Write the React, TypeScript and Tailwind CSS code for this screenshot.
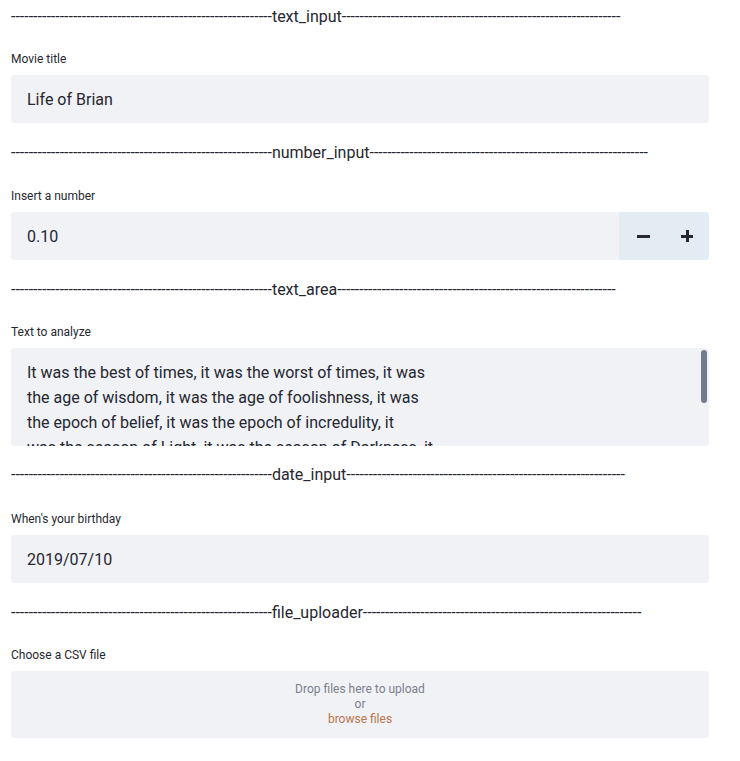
import React from "react";

const font = { fontFamily: 'Roboto, "Open Sans", sans-serif' };

function Divider({ name, top }: { name: string; top: string }) {
  return (
    <div className={`${top} h-[22px] whitespace-nowrap text-base leading-[22px] text-[#262730]`}>
      {"-".repeat(59) + name + "-".repeat(63)}
    </div>
  );
}

function Label({ children, top }: { children: React.ReactNode; top: string }) {
  return <div className={`${top} mb-[8px] h-4 text-xs leading-4 text-[#262730]`}>{children}</div>;
}

function Field({ children }: { children: React.ReactNode }) {
  return (
    <div className="flex h-12 items-center rounded bg-[#f0f2f6] px-4 pt-[2px] text-base text-[#262730]">
      {children}
    </div>
  );
}

const lines = [
  "It was the best of times, it was the worst of times, it was",
  "the age of wisdom, it was the age of foolishness, it was",
  "the epoch of belief, it was the epoch of incredulity, it",
  "was the season of Light, it was the season of Darkness, it",
];

export default function App() {
  return (
    <div className="min-h-[761px] bg-white px-[11px] pt-[6px]" style={font}>
      <div className="w-[698px]">
        <Divider name="text_input" top="mt-0" />
        <Label top="mt-[23px]">Movie title</Label>
        <Field>Life of Brian</Field>

        <Divider name="number_input" top="mt-[19px]" />
        <Label top="mt-[24px]">Insert a number</Label>
        <div className="flex h-12 rounded bg-[#f0f2f6] text-base text-[#262730]">
          <div className="flex flex-1 items-center px-4 pt-[2px]">0.10</div>
          <div className="flex w-[90px] items-center rounded-r bg-[#e4ecf3] pl-[3px]">
            <div className="flex w-[45px] items-center justify-center">
              <span className="block h-[3px] w-[13px] bg-[#262730]" />
            </div>
            <div className="flex w-[45px] items-center justify-center">
              <span className="relative block h-[12px] w-[12px]">
                <span className="absolute left-0 top-[5px] h-[3px] w-[12px] bg-[#262730]" />
                <span className="absolute left-[5px] top-0 h-[12px] w-[3px] bg-[#262730]" />
              </span>
            </div>
          </div>
        </div>

        <Divider name="text_area" top="mt-[19px]" />
        <Label top="mt-[23px]">Text to analyze</Label>
        <div className="relative h-[98px] overflow-hidden rounded bg-[#f0f2f6] text-[#262730]">
          <div className="px-4 pt-[12px] text-base leading-[25px]">
            {lines.map((l) => (
              <div key={l} className="whitespace-nowrap">
                {l}
              </div>
            ))}
          </div>
          <div className="absolute right-[2px] top-[2px] h-[53px] w-[6px] rounded-full bg-[#707c8c]" />
        </div>

        <Divider name="date_input" top="mt-[18px]" />
        <Label top="mt-[25px]">When's your birthday</Label>
        <Field>2019/07/10</Field>

        <Divider name="file_uploader" top="mt-[19px]" />
        <Label top="mt-[23px]">Choose a CSV file</Label>
        <div className="flex h-[67px] flex-col items-center justify-center rounded bg-[#f0f2f6] text-xs leading-[15px]">
          <span className="text-[#7d7f8c]">Drop files here to upload</span>
          <span className="text-[#7d7f8c]">or</span>
          <span className="text-[#b9754a]">browse files</span>
        </div>
      </div>
    </div>
  );
}
